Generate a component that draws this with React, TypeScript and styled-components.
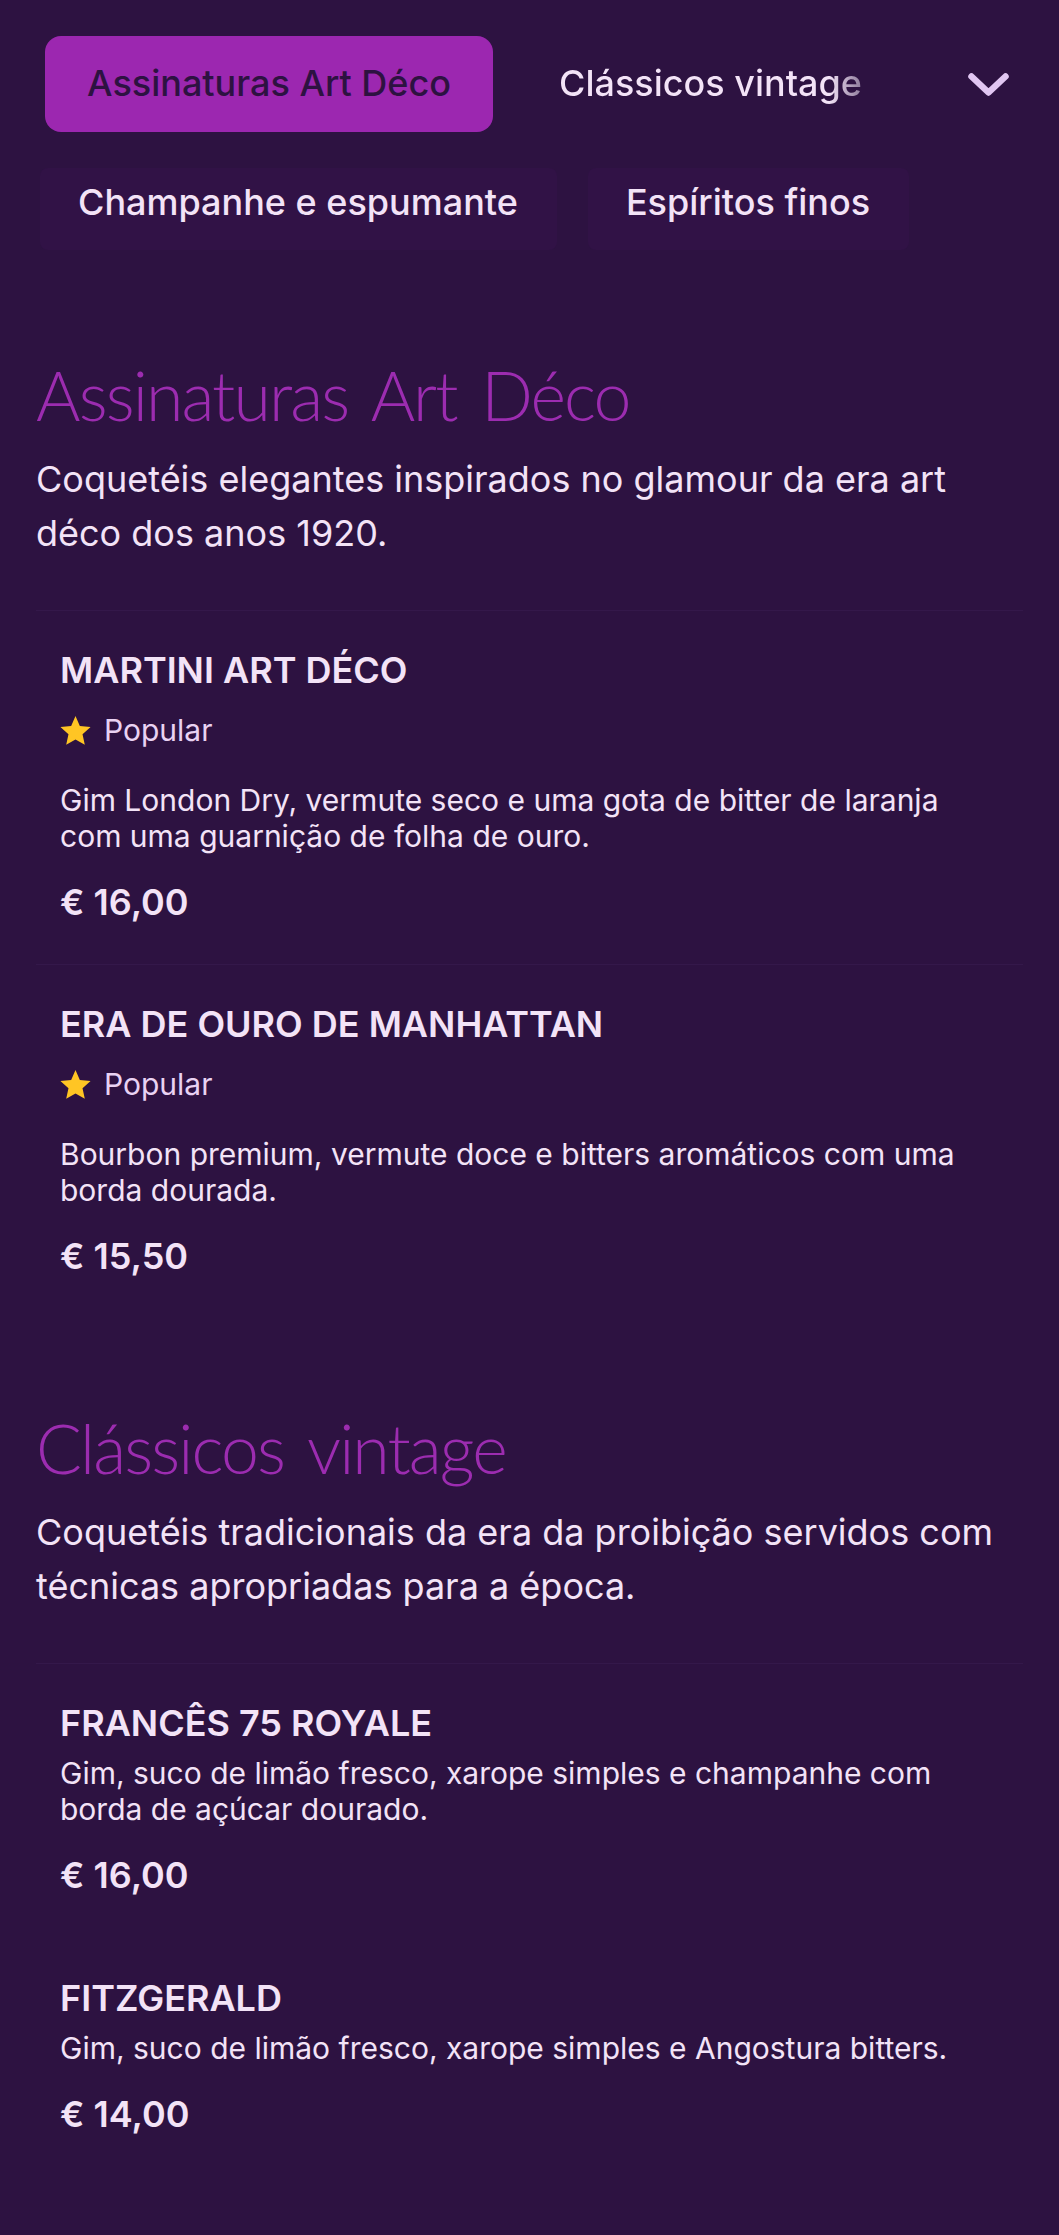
import React from 'react';
import styled, { createGlobalStyle } from 'styled-components';

interface MenuItem {
  name: string;
  popular?: boolean;
  description: string;
  price: string;
}

interface MenuSection {
  title: string;
  intro: string;
  items: MenuItem[];
}

const sections: MenuSection[] = [
  {
    title: 'Assinaturas Art Déco',
    intro: 'Coquetéis elegantes inspirados no glamour da era art déco dos anos 1920.',
    items: [
      {
        name: 'Martini Art Déco',
        popular: true,
        description:
          'Gim London Dry, vermute seco e uma gota de bitter de laranja com uma guarnição de folha de ouro.',
        price: '€ 16,00',
      },
      {
        name: 'Era de ouro de Manhattan',
        popular: true,
        description: 'Bourbon premium, vermute doce e bitters aromáticos com uma borda dourada.',
        price: '€ 15,50',
      },
    ],
  },
  {
    title: 'Clássicos vintage',
    intro: 'Coquetéis tradicionais da era da proibição servidos com técnicas apropriadas para a época.',
    items: [
      {
        name: 'Francês 75 Royale',
        description: 'Gim, suco de limão fresco, xarope simples e champanhe com borda de açúcar dourado.',
        price: '€ 16,00',
      },
      {
        name: 'Fitzgerald',
        description: 'Gim, suco de limão fresco, xarope simples e Angostura bitters.',
        price: '€ 14,00',
      },
    ],
  },
];

const App: React.FC = () => {
  return (
    <Page>
      <GlobalStyle />
      <TabRow>
        <ActiveTab>Assinaturas Art Déco</ActiveTab>
        <FadedTab>Clássicos vintage</FadedTab>
        <ExpandIcon viewBox="0 0 41 23" aria-hidden="true">
          <path
            d="M3.5 3.5 L20.5 19.5 L37.5 3.5"
            fill="none"
            stroke="currentColor"
            strokeWidth="6.5"
            strokeLinecap="round"
            strokeLinejoin="round"
          />
        </ExpandIcon>
      </TabRow>
      <OverflowRow>
        <OverflowTab>Champanhe e espumante</OverflowTab>
        <OverflowTab>Espíritos finos</OverflowTab>
      </OverflowRow>

      {sections.map((section) => (
        <Section key={section.title}>
          <SectionTitle>{section.title}</SectionTitle>
          <SectionIntro>{section.intro}</SectionIntro>
          <ItemList>
            {section.items.map((item) => (
              <Item key={item.name} popular={!!item.popular}>
                <ItemName>{item.name}</ItemName>
                {item.popular && (
                  <Badge>
                    <StarIcon viewBox="0 0 30 30" aria-hidden="true">
                      <polygon points="15,1 19.2,10.6 29.6,11.6 21.8,18.6 24,28.9 15,23.6 6,28.9 8.2,18.6 0.4,11.6 10.8,10.6" />
                    </StarIcon>
                    Popular
                  </Badge>
                )}
                <ItemDescription spaced={!!item.popular}>{item.description}</ItemDescription>
                <ItemPrice>{item.price}</ItemPrice>
              </Item>
            ))}
          </ItemList>
        </Section>
      ))}
    </Page>
  );
};

export default App;

const GlobalStyle = createGlobalStyle`
  html, body {
    margin: 0;
    padding: 0;
    background: #2d1241;
  }
`;

const Page = styled.div`
  width: 1059px;
  height: 2235px;
  overflow: hidden;
  box-sizing: border-box;
  background: #2d1241;
  color: #f3e3f7;
  font-family: Inter, 'Noto Sans', sans-serif;
`;

const TabRow = styled.div`
  display: flex;
  align-items: center;
  padding: 36px 50px 0 45px;
`;

const ActiveTab = styled.div`
  width: 448px;
  height: 96px;
  box-sizing: border-box;
  display: flex;
  align-items: center;
  justify-content: center;
  padding-bottom: 2px;
  background: #9c27b0;
  border-radius: 16px;
  color: #2d1241;
  font-size: 36px;
  font-weight: 500;
`;

const FadedTab = styled.div`
  margin-left: 66px;
  font-size: 36px;
  font-weight: 500;
  padding-bottom: 2px;
  background: linear-gradient(90deg, #f3e3f7 89%, #8d7a9a 100%);
  -webkit-background-clip: text;
  background-clip: text;
  color: transparent;
`;

const ExpandIcon = styled.svg`
  width: 41px;
  height: 23px;
  margin-left: auto;
  color: #e1c6f2;
`;

const OverflowRow = styled.div`
  display: flex;
  gap: 31px;
  padding: 36px 0 0 40px;
`;

const OverflowTab = styled.div`
  height: 82px;
  box-sizing: border-box;
  display: flex;
  align-items: center;
  padding: 0 39px 14px 38px;
  background: #311246;
  border-radius: 8px;
  font-size: 36px;
  font-weight: 500;
`;

const Section = styled.section`
  padding: 0 36px;
  margin-top: 100px;

  & + & {
    margin-top: 85px;
  }
`;

const SectionTitle = styled.h2`
  margin: 0;
  padding-top: 3px;
  color: #9c2cb0;
  font-family: Lato, sans-serif;
  font-size: 68px;
  font-weight: 300;
  line-height: 84px;
  letter-spacing: -1.9px;
  word-spacing: 8px;
`;

const SectionIntro = styled.p`
  margin: 15px 0 0;
  font-size: 36px;
  line-height: 54px;
`;

const ItemList = styled.div`
  margin-top: 50px;
  border-top: 1px solid #34184a;
`;

const Item = styled.article<{ popular: boolean }>`
  padding: 35px 24px ${({ popular }) => (popular ? '41px' : '43px')};
  border-bottom: ${({ popular }) => (popular ? '1px solid #34184a' : 'none')};

  &:last-child {
    border-bottom: none;
  }
`;

const ItemName = styled.h3`
  margin: 0;
  font-size: 36px;
  font-weight: 600;
  line-height: 48px;
  text-transform: uppercase;
`;

const Badge = styled.div`
  display: flex;
  align-items: center;
  gap: 13px;
  margin-top: 18px;
  font-size: 30px;
  line-height: 36px;
  color: #e9d2f3;
`;

const StarIcon = styled.svg`
  width: 31px;
  height: 31px;
  fill: #ffc524;
`;

const ItemDescription = styled.p<{ spaced: boolean }>`
  margin: ${({ spaced }) => (spaced ? '34px' : '8px')} 0 0;
  font-size: 30px;
  line-height: 36px;
`;

const ItemPrice = styled.div`
  margin-top: 27px;
  font-size: 36px;
  font-weight: 600;
  line-height: 42px;
`;
